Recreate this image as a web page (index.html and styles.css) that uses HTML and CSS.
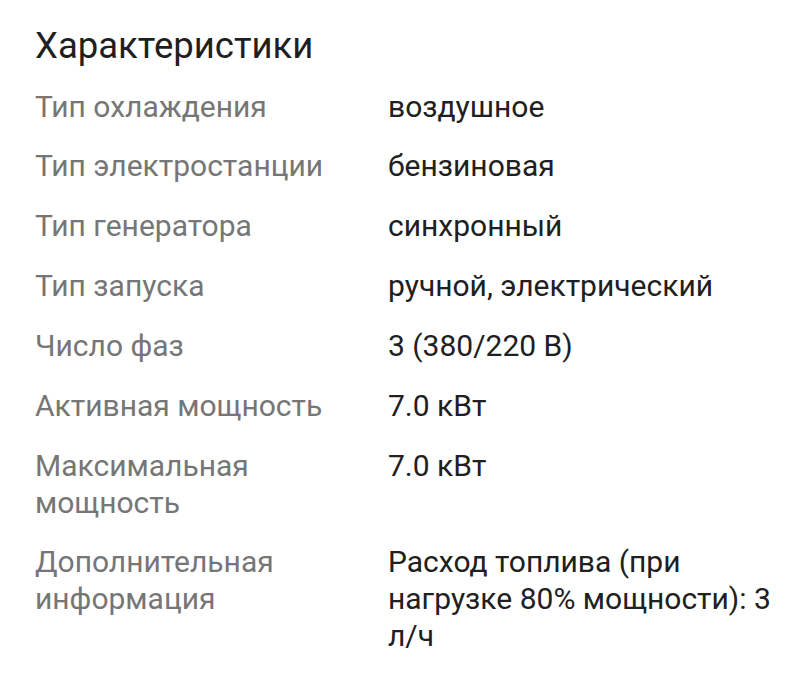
FILE: index.html
```html
<!DOCTYPE html>
<html lang="ru">
<head>
<meta charset="utf-8">
<link rel="stylesheet" href="styles.css">
</head>
<body>
<section class="specs">
  <h2 class="specs-title">Характеристики</h2>
  <dl class="specs-list">
    <dt>Тип охлаждения</dt><dd>воздушное</dd>
    <dt>Тип электростанции</dt><dd>бензиновая</dd>
    <dt>Тип генератора</dt><dd>синхронный</dd>
    <dt>Тип запуска</dt><dd>ручной, электрический</dd>
    <dt>Число фаз</dt><dd>3 (380/220 В)</dd>
    <dt>Активная мощность</dt><dd>7.0 кВт</dd>
    <dt>Максимальная мощность</dt><dd>7.0 кВт</dd>
    <dt>Дополнительная информация</dt><dd>Расход топлива (при нагрузке 80% мощности): 3 л/ч</dd>
  </dl>
</section>
</body>
</html>
```
FILE: styles.css
```css
html, body {
  margin: 0;
  padding: 0;
  background: #ffffff;
}
body {
  font-family: Roboto, "Noto Sans", sans-serif;
  color: #212121;
}
.specs {
  padding: 22px 10px 0 35px;
}
.specs-title {
  margin: 0 0 18.5px 0;
  font-size: 36.5px;
  line-height: 48px;
  font-weight: 400;
  color: #1f1f1f;
}
.specs-list {
  margin: 0;
  display: grid;
  grid-template-columns: 330px 1fr;
  column-gap: 23px;
  row-gap: 23.2px;
  font-size: 30px;
  line-height: 36.7px;
}
.specs-list dt {
  color: #767676;
}
.specs-list dd {
  margin: 0;
  color: #202020;
}
```
